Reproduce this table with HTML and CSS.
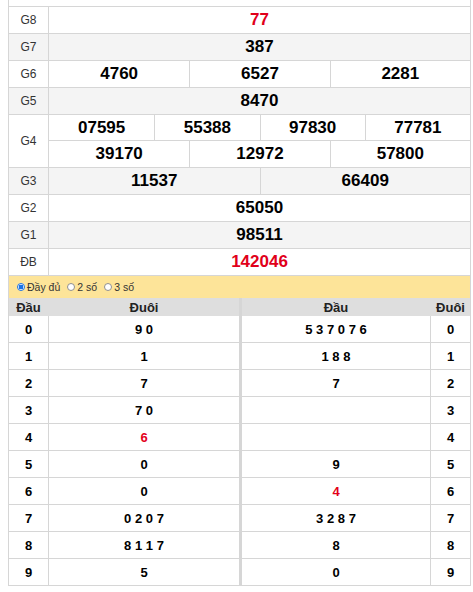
FILE: index.html
```html
<!DOCTYPE html>
<html lang="vi">
<head>
<meta charset="utf-8">
<link rel="stylesheet" href="styles.css">
</head>
<body>
<div class="board">
  <div class="toprow"></div>
  <div class="row"><div class="lbl">G8</div><div class="vals c1"><div class="num red">77</div></div></div>
  <div class="row alt"><div class="lbl">G7</div><div class="vals c1"><div class="num">387</div></div></div>
  <div class="row"><div class="lbl">G6</div><div class="vals c3"><div class="num">4760</div><div class="num">6527</div><div class="num">2281</div></div></div>
  <div class="row alt"><div class="lbl">G5</div><div class="vals c1"><div class="num">8470</div></div></div>
  <div class="row"><div class="lbl">G4</div>
    <div class="stack">
      <div class="vals c4 sub"><div class="num">07595</div><div class="num">55388</div><div class="num">97830</div><div class="num">77781</div></div>
      <div class="vals c3"><div class="num">39170</div><div class="num">12972</div><div class="num">57800</div></div>
    </div>
  </div>
  <div class="row alt"><div class="lbl">G3</div><div class="vals c2"><div class="num">11537</div><div class="num">66409</div></div></div>
  <div class="row"><div class="lbl">G2</div><div class="vals c1"><div class="num">65050</div></div></div>
  <div class="row alt"><div class="lbl">G1</div><div class="vals c1"><div class="num">98511</div></div></div>
  <div class="row"><div class="lbl">ĐB</div><div class="vals c1"><div class="num red">142046</div></div></div>

  <div class="opts">
    <label class="opt"><span class="radio on"></span>Đầy đủ</label>
    <label class="opt"><span class="radio"></span>2 số</label>
    <label class="opt"><span class="radio"></span>3 số</label>
  </div>

  <div class="loto">
    <div class="half left">
      <div class="lr head"><div class="k">Đầu</div><div class="v">Đuôi</div></div>
      <div class="lr"><div class="k">0</div><div class="v">9 0</div></div>
      <div class="lr"><div class="k">1</div><div class="v">1</div></div>
      <div class="lr"><div class="k">2</div><div class="v">7</div></div>
      <div class="lr"><div class="k">3</div><div class="v">7 0</div></div>
      <div class="lr"><div class="k">4</div><div class="v red2">6</div></div>
      <div class="lr"><div class="k">5</div><div class="v">0</div></div>
      <div class="lr"><div class="k">6</div><div class="v">0</div></div>
      <div class="lr"><div class="k">7</div><div class="v">0 2 0 7</div></div>
      <div class="lr"><div class="k">8</div><div class="v">8 1 1 7</div></div>
      <div class="lr"><div class="k">9</div><div class="v">5</div></div>
    </div>
    <div class="half right">
      <div class="rr head"><div class="v">Đầu</div><div class="k">Đuôi</div></div>
      <div class="rr"><div class="v">5 3 7 0 7 6</div><div class="k">0</div></div>
      <div class="rr"><div class="v">1 8 8</div><div class="k">1</div></div>
      <div class="rr"><div class="v">7</div><div class="k">2</div></div>
      <div class="rr"><div class="v"></div><div class="k">3</div></div>
      <div class="rr"><div class="v"></div><div class="k">4</div></div>
      <div class="rr"><div class="v">9</div><div class="k">5</div></div>
      <div class="rr"><div class="v red2">4</div><div class="k">6</div></div>
      <div class="rr"><div class="v">3 2 8 7</div><div class="k">7</div></div>
      <div class="rr"><div class="v">8</div><div class="k">8</div></div>
      <div class="rr"><div class="v">0</div><div class="k">9</div></div>
    </div>
  </div>
</div>
</body>
</html>
```

FILE: styles.css
```css
* { box-sizing: border-box; }
html, body { margin: 0; padding: 0; background: #fff; }
body { font-family: "Liberation Sans", Arial, sans-serif; color: #000; }

.board {
  width: 463px;
  margin-left: 8px;
  border-left: 1px solid #d6d6d6;
  border-right: 1px solid #d6d6d6;
}
.toprow { height: 7px; border-bottom: 1px solid #d6d6d6; }

.row {
  display: grid;
  grid-template-columns: 40px 1fr;
  border-bottom: 1px solid #d6d6d6;
  background: #fff;
}
.row.alt { background: #f4f4f4; }
.lbl {
  border-right: 1px solid #d6d6d6;
  display: flex;
  align-items: center;
  justify-content: center;
  font-size: 12px;
  color: #333;
}
.vals { display: grid; height: 26px; }
.vals.c1 { grid-template-columns: 1fr; }
.vals.c2 { grid-template-columns: 1fr 1fr; }
.vals.c3 { grid-template-columns: 1fr 1fr 1fr; }
.vals.c4 { grid-template-columns: 1fr 1fr 1fr 1fr; }
.vals.sub { border-bottom: 1px solid #d6d6d6; }
.num {
  display: flex;
  align-items: center;
  justify-content: center;
  font-size: 17px;
  font-weight: bold;
  color: #000;
  border-left: 1px solid #d6d6d6;
}
.num:first-child { border-left: none; }
.red { color: #e1001a; }

.opts {
  height: 22px;
  background: #fde499;
  display: flex;
  align-items: center;
  padding-left: 8px;
  gap: 7px;
  font-size: 10.5px;
  color: #333;
}
.opt { display: flex; align-items: center; gap: 2px; }
.radio {
  width: 8px;
  height: 8px;
  border-radius: 50%;
  border: 1px solid #8f8f8f;
  background: #fff;
}
.radio.on {
  border-color: #1a73e8;
  background: radial-gradient(circle, #1a73e8 0 2.2px, #fff 2.6px);
}

.loto { display: flex; }
.half { display: flex; flex-direction: column; }
.half.left { width: 231px; border-right: 1px solid #d6d6d6; }
.half.right { flex: 1; border-left: 2px solid #d6d6d6; }
.lr, .rr {
  display: grid;
  height: 27px;
  border-bottom: 1px solid #d6d6d6;
  font-size: 13px;
  font-weight: bold;
}
.lr { grid-template-columns: 40px 1fr; }
.rr { grid-template-columns: 1fr 40px; }
.lr.head, .rr.head {
  height: 18px;
  background: #dedede;
  border-bottom: none;
  color: #222;
}
.lr .k { border-right: 1px solid #d6d6d6; }
.rr .k { border-left: 1px solid #d6d6d6; }
.lr.head .k, .rr.head .k { border-color: #dedede; }
.k, .v {
  display: flex;
  align-items: center;
  justify-content: center;
}
.red2 { color: #e3001b; }
```
